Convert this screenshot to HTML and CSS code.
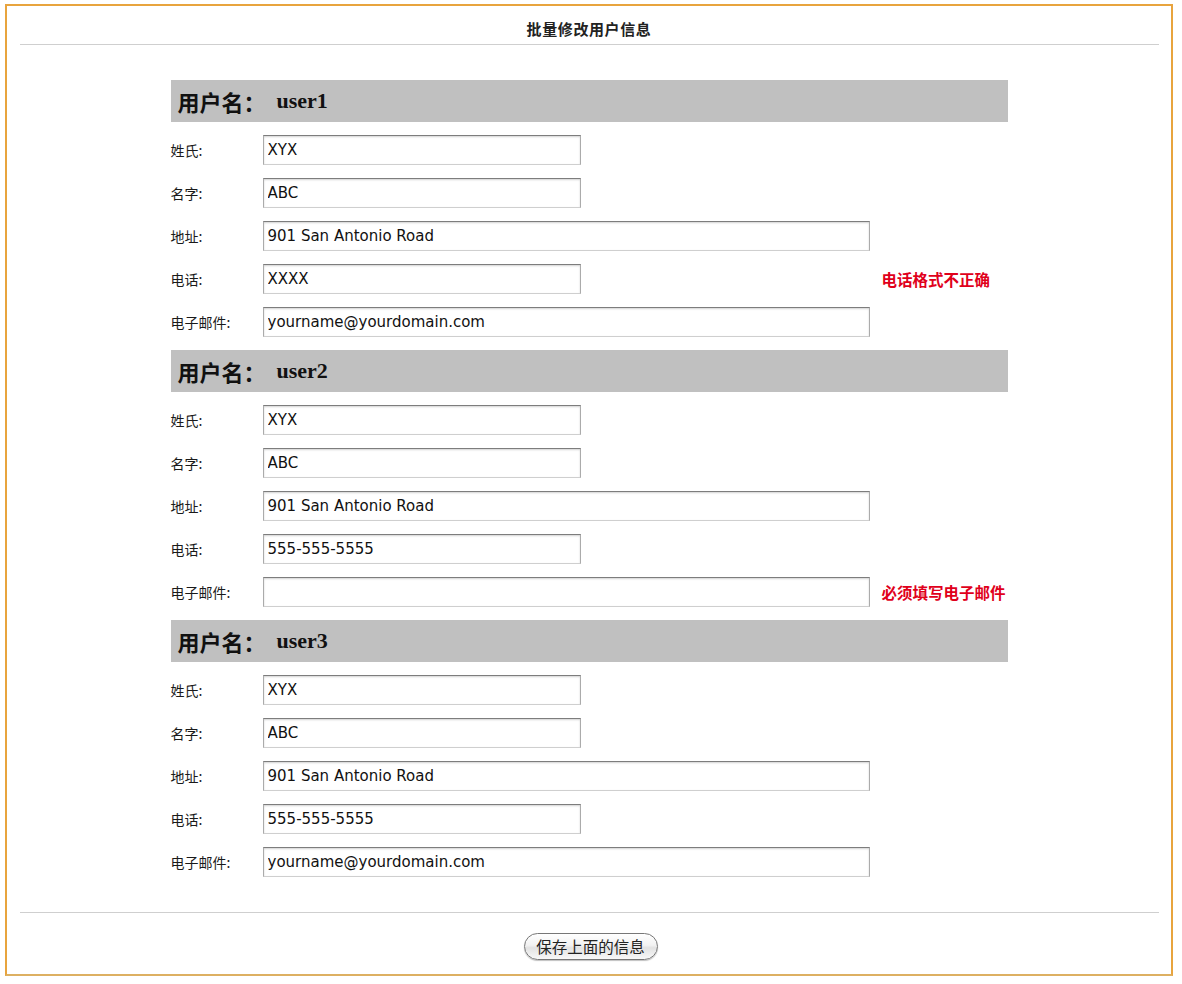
FILE: index.html
```html
<!DOCTYPE html>
<html lang="zh-CN">
<head>
<meta charset="utf-8">
<title>批量修改用户信息</title>
<link rel="stylesheet" href="styles.css">
</head>
<body>
<div class="frame">
  <div class="frame-title">批量修改用户信息</div>
  <hr class="rule">
  <form class="content">
    <section class="user">
      <h2 class="user-bar">用户名：<span class="uname">user1</span></h2>
      <div class="row"><label class="lbl">姓氏:</label><input class="field short" value="XYX"></div>
      <div class="row"><label class="lbl">名字:</label><input class="field short" value="ABC"></div>
      <div class="row"><label class="lbl">地址:</label><input class="field long" value="901 San Antonio Road"></div>
      <div class="row"><label class="lbl">电话:</label><input class="field short" value="XXXX"><span class="err">电话格式不正确</span></div>
      <div class="row"><label class="lbl">电子邮件:</label><input class="field long" value="yourname@yourdomain.com"></div>
    </section>
    <section class="user">
      <h2 class="user-bar">用户名：<span class="uname">user2</span></h2>
      <div class="row"><label class="lbl">姓氏:</label><input class="field short" value="XYX"></div>
      <div class="row"><label class="lbl">名字:</label><input class="field short" value="ABC"></div>
      <div class="row"><label class="lbl">地址:</label><input class="field long" value="901 San Antonio Road"></div>
      <div class="row"><label class="lbl">电话:</label><input class="field short" value="555-555-5555"></div>
      <div class="row"><label class="lbl">电子邮件:</label><input class="field long" value=""><span class="err">必须填写电子邮件</span></div>
    </section>
    <section class="user">
      <h2 class="user-bar">用户名：<span class="uname">user3</span></h2>
      <div class="row"><label class="lbl">姓氏:</label><input class="field short" value="XYX"></div>
      <div class="row"><label class="lbl">名字:</label><input class="field short" value="ABC"></div>
      <div class="row"><label class="lbl">地址:</label><input class="field long" value="901 San Antonio Road"></div>
      <div class="row"><label class="lbl">电话:</label><input class="field short" value="555-555-5555"></div>
      <div class="row"><label class="lbl">电子邮件:</label><input class="field long" value="yourname@yourdomain.com"></div>
    </section>
  </form>
  <hr class="rule">
  <div class="footer">
    <button type="button" class="save">保存上面的信息</button>
  </div>
</div>
</body>
</html>
```
FILE: styles.css
```css
html, body {
  margin: 0;
  padding: 0;
  background: #ffffff;
}

body {
  font-family: "Noto Sans CJK SC", "Noto Sans", sans-serif;
  color: #222;
}

.frame {
  box-sizing: border-box;
  width: 1168px;
  margin: 4px 0 0 5px;
  border: 2px solid #e8a43e;
  border-bottom-color: #ddb062;
  background: #fff;
}

.frame-title {
  height: 38px;
  box-sizing: border-box;
  padding-top: 13px;
  line-height: 20px;
  text-align: center;
  font-size: 15px;
  font-weight: bold;
  color: #222;
  letter-spacing: 0.6px;
}

.rule {
  border: 0;
  height: 1px;
  background: #cfcfcf;
  margin: 0 12px 0 13px;
}

.content {
  width: 837px;
  margin: 0 auto;
  padding: 35px 0;
  display: flex;
  flex-direction: column;
  gap: 13px;
}

.user {
  display: flex;
  flex-direction: column;
  gap: 13px;
}

.user-bar {
  margin: 0;
  height: 42px;
  box-sizing: border-box;
  background: #c0c0c0;
  display: flex;
  align-items: center;
  padding-left: 7px;
  font-family: "Noto Sans CJK SC", sans-serif;
  font-size: 22px;
  font-weight: bold;
  color: #111;
}

.uname {
  font-family: "Liberation Serif", serif;
  font-size: 22px;
  font-weight: bold;
  margin-left: 11px;
}

.row {
  display: grid;
  grid-template-columns: 92px 607px 12px auto;
  align-items: center;
  height: 30px;
}

.lbl {
  grid-column: 1;
  font-size: 14px;
  color: #1a1a1a;
}

.field {
  grid-column: 2;
  box-sizing: border-box;
  height: 30px;
  margin: 0;
  padding: 0 4px;
  border: 1px solid #ababab;
  border-top-color: #7d7d7d;
  border-bottom-color: #cfcfcf;
  box-shadow: inset 0 1px 2px rgba(0, 0, 0, 0.18);
  border-radius: 0;
  background: #fff;
  font-family: "DejaVu Sans", sans-serif;
  font-size: 15px;
  color: #111;
  outline: none;
}

.field.short {
  width: 318px;
}

.field.long {
  width: 607px;
}

.err {
  grid-column: 4;
  font-size: 15.5px;
  font-weight: bold;
  color: #e0001b;
}

.footer {
  height: 61px;
  box-sizing: border-box;
  padding-top: 20px;
  display: flex;
  justify-content: center;
  align-items: flex-start;
}

.save {
  width: 134px;
  height: 27px;
  box-sizing: border-box;
  margin: 0 0 0 3px;
  padding: 0;
  border: 1px solid #777;
  border-radius: 14px;
  background: linear-gradient(#ffffff 0%, #f2f2f2 45%, #e2e2e2 55%, #f8f8f8 100%);
  box-shadow: 0 1px 1px rgba(0, 0, 0, 0.25);
  font-family: "Noto Sans CJK SC", sans-serif;
  font-size: 15.5px;
  color: #222;
  line-height: 25px;
}
```
